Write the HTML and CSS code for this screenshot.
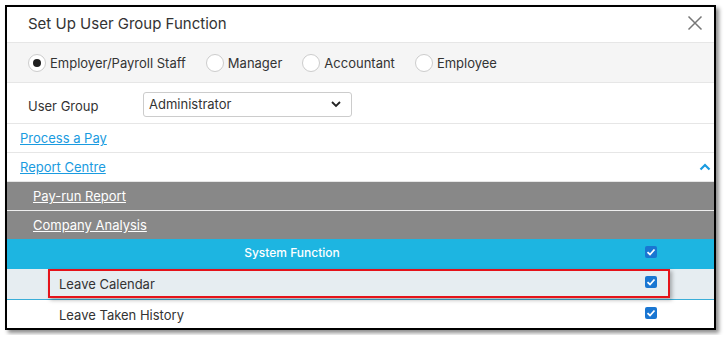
FILE: index.html
```html
<!DOCTYPE html>
<html lang="en">
<head>
    <meta charset="UTF-8">
    <title>Set Up User Group Function</title>
    <link rel="stylesheet" href="styles.css">
</head>
<body>
    <div class="dialog">
        <div class="dialog-header">
            <span class="dialog-title">Set Up User Group Function</span>
            <span class="close-btn">
                <svg width="16" height="16" viewBox="0 0 16 16"><path d="M1.5 1.5 L14.5 14.5 M14.5 1.5 L1.5 14.5" stroke="#777" stroke-width="1.5" fill="none"/></svg>
            </span>
        </div>

        <div class="role-row">
            <label class="role"><span class="radio checked"></span>Employer/Payroll Staff</label>
            <label class="role"><span class="radio"></span>Manager</label>
            <label class="role"><span class="radio"></span>Accountant</label>
            <label class="role"><span class="radio"></span>Employee</label>
        </div>

        <div class="group-row">
            <span class="group-label">User Group</span>
            <div class="select">
                <span>Administrator</span>
                <svg width="12" height="8" viewBox="0 0 12 8"><path d="M2 2 L6 6 L10 2" stroke="#222" stroke-width="1.8" fill="none"/></svg>
            </div>
        </div>

        <div class="link-row"><a href="#">Process a Pay</a></div>
        <div class="link-row">
            <a href="#">Report Centre</a>
            <svg class="chev-up" width="12" height="8" viewBox="0 0 12 8"><path d="M1.5 6.5 L6 2 L10.5 6.5" stroke="#1a9be0" stroke-width="2.2" fill="none"/></svg>
        </div>

        <div class="sub-row"><a href="#">Pay-run Report</a></div>
        <div class="sub-row"><a href="#">Company Analysis</a></div>

        <div class="func-row func-head">
            <span class="func-name">System Function</span>
            <span class="func-check"><span class="checkbox"></span></span>
        </div>
        <div class="func-row highlight">
            <span class="func-name">Leave Calendar</span>
            <span class="func-check"><span class="checkbox"></span></span>
            <div class="callout"></div>
        </div>
        <div class="func-row">
            <span class="func-name">Leave Taken History</span>
            <span class="func-check"><span class="checkbox"></span></span>
        </div>
    </div>
</body>
</html>
```

FILE: styles.css
```css
body {
    margin: 0;
    padding: 5px;
    background: #fff;
    font-family: 'Inter', 'Noto Sans', sans-serif;
    font-size: 13px;
    color: #333;
}
.dialog {
    width: 707px;
    height: 321px;
    border: 2px solid #000;
    background: #fff;
    overflow: hidden;
    box-shadow: 3px 3px 4px rgba(0, 0, 0, 0.45);
}
.dialog-header {
    display: flex;
    align-items: center;
    justify-content: space-between;
    padding: 0 11px 3px 21px;
    box-sizing: border-box;
    height: 36px;
    border-bottom: 1px solid #e6e6e6;
}
.dialog-title {
    font-size: 15px;
    color: #333;
}
.close-btn {
    display: flex;
}
.role-row {
    height: 39px;
    display: flex;
    align-items: center;
    padding-left: 21px;
    background: #f5f5f5;
    border-bottom: 1px solid #e6e6e6;
}
.role {
    display: flex;
    align-items: center;
    margin-right: 20px;
    color: #333;
}
.radio {
    width: 18px;
    height: 18px;
    border: 1px solid #ccc;
    border-radius: 50%;
    background: #fff;
    margin-right: 4px;
    box-sizing: border-box;
    position: relative;
}
.radio.checked::after {
    content: "";
    position: absolute;
    left: 4px;
    top: 4px;
    width: 8px;
    height: 8px;
    border-radius: 50%;
    background: #1f1f1f;
}
.group-row {
    height: 40px;
    display: flex;
    align-items: center;
    padding-left: 21px;
    border-bottom: 1px solid #e6e6e6;
}
.group-label {
    width: 115px;
    padding-top: 6px;
}
.select {
    width: 209px;
    height: 25px;
    box-sizing: border-box;
    border: 1px solid #ccc;
    border-radius: 3px;
    display: flex;
    align-items: center;
    justify-content: space-between;
    padding: 0 9px 0 5px;
    margin-top: 2px;
}
.link-row {
    height: 28px;
    display: flex;
    align-items: center;
    justify-content: space-between;
    padding: 0 3px 0 13px;
    border-bottom: 1px solid #e6e6e6;
}
.link-row a {
    color: #1a9be0;
}
.sub-row {
    height: 28px;
    display: flex;
    align-items: center;
    padding-left: 26px;
    background: #888;
    border-bottom: 1px solid #eee;
}
.sub-row a {
    color: #fff;
}
.sub-row + .sub-row {
    border-bottom: none;
}
.func-row {
    height: 30px;
    display: flex;
    align-items: center;
    position: relative;
}
.func-name {
    width: 570px;
    padding-left: 52px;
    box-sizing: border-box;
}
.func-check {
    display: flex;
    padding-left: 68px;
}
.func-head {
    background: #1db5e1;
    color: #fff;
}
.func-head .func-name {
    text-align: center;
    padding-left: 0;
    padding-bottom: 3px;
    font-size: 12px;
    font-weight: 500;
}
.highlight {
    background: #e6edf1;
    border-bottom: 1px solid #3aaed8;
}
.callout {
    position: absolute;
    left: 41px;
    top: 0;
    width: 622px;
    height: 29px;
    box-sizing: border-box;
    border: 2px solid #e5131a;
    box-shadow: 2px 2px 4px rgba(0, 0, 0, 0.3);
}
.checkbox {
    width: 12px;
    height: 12px;
    border-radius: 2px;
    background: #1976d2 url("data:image/svg+xml,%3Csvg xmlns='http://www.w3.org/2000/svg' viewBox='0 0 12 12'%3E%3Cpath d='M2.5 6.2 L5 8.5 L9.5 3.5' stroke='white' stroke-width='1.8' fill='none'/%3E%3C/svg%3E") no-repeat center;
    margin-top: -4px;
}
```
